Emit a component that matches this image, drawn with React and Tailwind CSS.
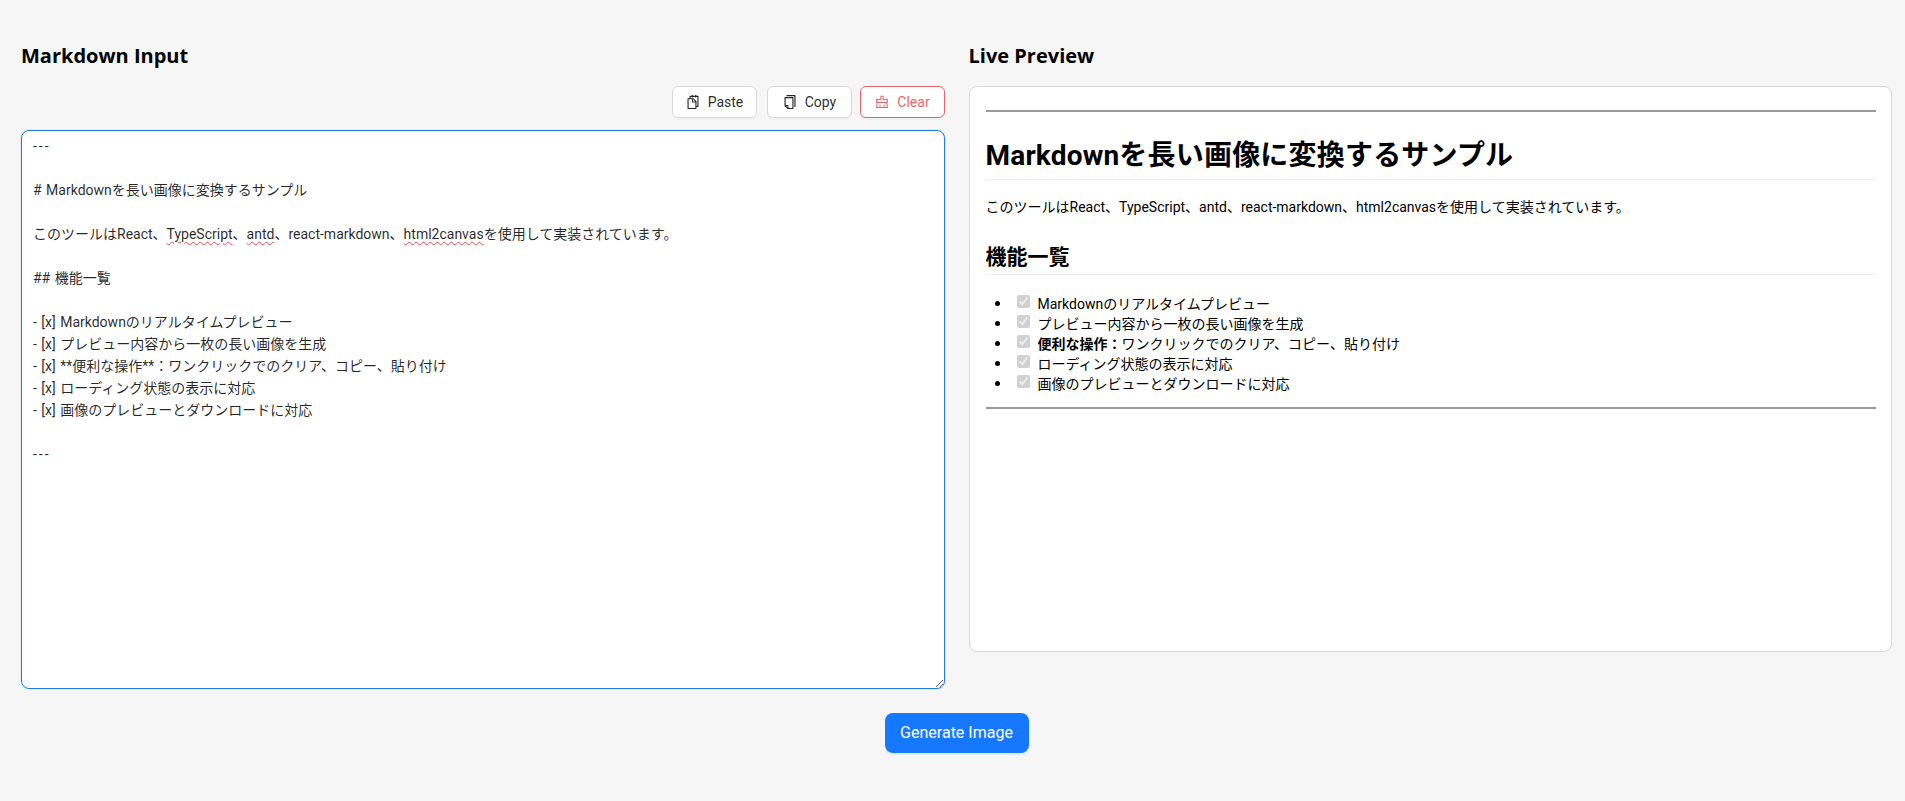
import React from "react";
import { AiOutlineSnippets, AiOutlineCopy, AiOutlineClear } from "react-icons/ai";

const font = "font-['Roboto','Noto_Sans_CJK_JP',sans-serif]";
const headingFont = "font-['Open_Sans','Noto_Sans_CJK_JP',sans-serif]";

const items = [
  <>Markdownのリアルタイムプレビュー</>,
  <>プレビュー内容から一枚の長い画像を生成</>,
  <>
    <strong className="font-bold">便利な操作：</strong>ワンクリックでのクリア、コピー、貼り付け
  </>,
  <>ローディング状態の表示に対応</>,
  <>画像のプレビューとダウンロードに対応</>,
];

function Squiggle({ children }) {
  return <span className="underline decoration-wavy decoration-[#e5484d] decoration-1 underline-offset-2">{children}</span>;
}

function ToolButton({ icon, label, danger, className = "" }) {
  return (
    <button
      className={
        "flex h-8 w-[85px] items-center justify-center gap-[7px] rounded-md border bg-white text-sm shadow-[0_2px_0_rgba(0,0,0,0.02)] " +
        (danger ? "border-[#e5636b] text-[#e8686b] " : "border-[#d9d9d9] text-black/85 ") +
        className
      }
    >
      {icon}
      <span>{label}</span>
    </button>
  );
}

export default function App() {
  return (
    <div className={`min-h-[801px] bg-[#f6f6f6] pl-[21px] pr-[13px] pt-[41px] text-black ${font}`}>
      <div className="grid grid-cols-2 gap-6">
        <div>
          <h2 className={`mb-[15px] text-xl font-bold leading-[30px] ${headingFont}`}>Markdown Input</h2>
          <div className="mb-3 flex justify-end gap-2">
            <ToolButton icon={<AiOutlineSnippets size={16} />} label="Paste" className="mr-[2px]" />
            <ToolButton icon={<AiOutlineCopy size={16} />} label="Copy" />
            <ToolButton icon={<AiOutlineClear size={16} />} label="Clear" danger />
          </div>
          <div className="h-[559px] resize overflow-auto whitespace-pre-wrap rounded-lg border border-[#1d7fe6] bg-white px-[11px] py-1 text-sm leading-[22px] text-black/85 shadow-[0_0_0_1px_rgba(5,145,255,0.1)] [word-spacing:1px]">
            <span className="tracking-[2px]">---</span>
            {`

# Markdownを長い画像に変換するサンプル

このツールはReact、`}
            <Squiggle>TypeScript</Squiggle>、<Squiggle>antd</Squiggle>、react-markdown、<Squiggle>html2canvas</Squiggle>
            {`を使用して実装されています。

## 機能一覧

- [x] Markdownのリアルタイムプレビュー
- [x] プレビュー内容から一枚の長い画像を生成
- [x] **便利な操作**：ワンクリックでのクリア、コピー、貼り付け
- [x] ローディング状態の表示に対応
- [x] 画像のプレビューとダウンロードに対応

`}
            <span className="tracking-[2px]">---</span>
          </div>
        </div>
        <div>
          <h2 className={`mb-[15px] text-xl font-bold leading-[30px] ${headingFont}`}>Live Preview</h2>
          <div className="h-[566px] rounded-lg border border-[#d9d9d9] bg-white pl-4 pr-[15px] pt-[23px] text-sm leading-5">
            <hr className="border-t-2 border-[#999]" />
            <h1 className="mt-[23px] border-b border-[#eee] pb-[2px] text-[28px] font-bold leading-[42px] tracking-[0.2px]">
              Markdownを長い画像に変換するサンプル
            </h1>
            <p className="mt-[17px]">このツールはReact、TypeScript、antd、react-markdown、html2canvasを使用して実装されています。</p>
            <h2 className="mt-6 border-b border-[#eee] pb-px text-[21px] font-bold leading-[32px]">機能一覧</h2>
            <ul className="mt-[17px] flex list-disc flex-col pl-[26px] marker:text-base">
              {items.map((item, i) => (
                <li key={i} className="h-5">
                  <input type="checkbox" checked disabled readOnly className="ml-[5px] mr-2 h-[13px] w-[13px] align-[1px]" />
                  {item}
                </li>
              ))}
            </ul>
            <hr className="mt-[15px] border-t-2 border-[#999]" />
          </div>
        </div>
      </div>
      <div className="mt-6 flex justify-center">
        <button className="h-10 w-36 rounded-lg bg-[#1677ff] text-base text-white shadow-[0_2px_0_rgba(5,145,255,0.1)]">
          Generate Image
        </button>
      </div>
    </div>
  );
}
